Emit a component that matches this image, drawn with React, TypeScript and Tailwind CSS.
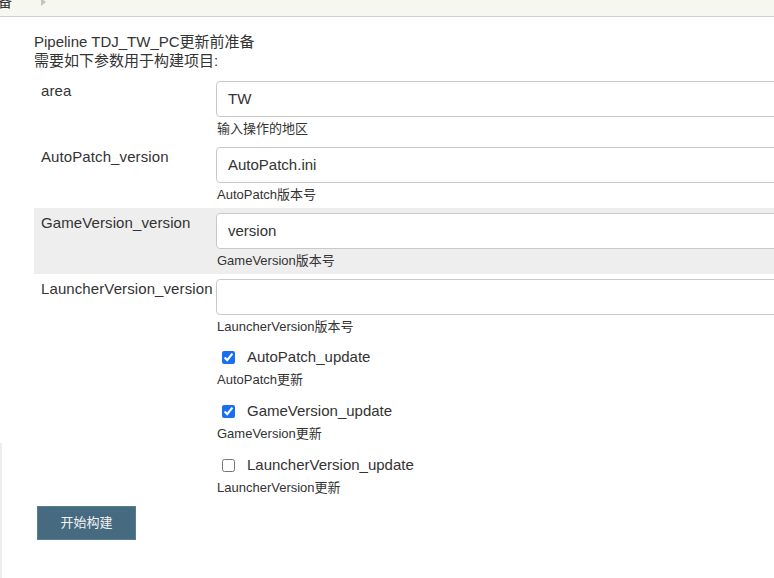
import React from "react";

const fields = [
  { name: "area", value: "TW", desc: "输入操作的地区", hl: false },
  { name: "AutoPatch_version", value: "AutoPatch.ini", desc: "AutoPatch版本号", hl: false },
  { name: "GameVersion_version", value: "version", desc: "GameVersion版本号", hl: true },
  { name: "LauncherVersion_version", value: "", desc: "LauncherVersion版本号", hl: false },
];

const checks = [
  { name: "AutoPatch_update", checked: true, desc: "AutoPatch更新" },
  { name: "GameVersion_update", checked: true, desc: "GameVersion更新" },
  { name: "LauncherVersion_update", checked: false, desc: "LauncherVersion更新" },
];

const font = { fontFamily: '"Liberation Sans", "Noto Sans CJK SC", sans-serif' };

export default function App() {
  return (
    <div className="relative w-[774px] h-[578px] overflow-hidden bg-white text-[#333]" style={font}>
      {/* breadcrumb bar */}
      <div className="h-[17px] bg-[#f6f8ef] border-b border-[#cfd0c8] flex items-end overflow-hidden">
        <span className="text-[14px] leading-[18px] mb-[5px] -ml-[2px]">备</span>
        <svg width="8" height="8" viewBox="0 0 8 8" className="ml-[28px] self-start -mt-[2px]">
          <path d="M1 0 L6 4 L1 8 Z" fill="#c4c4c4" />
        </svg>
      </div>

      {/* sidebar edge */}
      <div className="absolute left-0 top-[443px] bottom-0 w-[2px] bg-[#eeeeee]" />

      <div className="pl-[34px] pt-[16px]">
        <div className="text-[15px] leading-[18px]">Pipeline TDJ_TW_PC更新前准备</div>
        <div className="text-[15px] leading-[19px]">需要如下参数用于构建项目:</div>

        <div className="mt-[6px]">
          {fields.map((f) => (
            <div key={f.name} className={`flex pt-[5px] pb-[5px] ${f.hl ? "bg-[#eeeeee]" : ""}`}>
              <div className="w-[182px] shrink-0 pl-[7px] pt-[1px] text-[15px] leading-[18px] whitespace-nowrap tracking-[0.1px]">
                {f.name}
              </div>
              <div className="flex flex-col">
                <div className="w-[620px] h-[36px] bg-white border border-[#c9c9c9] rounded-[4px] pl-[11px] flex items-center text-[15px]">
                  {f.value}
                </div>
                <div className="mt-[4px] pl-[1px] text-[13px] leading-[16px]">{f.desc}</div>
              </div>
            </div>
          ))}

          {checks.map((c) => (
            <div key={c.name} className="flex pt-[8px] pb-[6px]">
              <div className="w-[182px] shrink-0" />
              <div className="flex flex-col">
                <label className="flex items-center h-[18px] text-[15px] leading-[18px]">
                  <input
                    type="checkbox"
                    defaultChecked={c.checked}
                    className="w-[13px] h-[13px] m-0 ml-[6px] mr-[12px] accent-[#1a6ff0]"
                  />
                  {c.name}
                </label>
                <div className="mt-[6px] pl-[1px] text-[13px] leading-[16px]">{c.desc}</div>
              </div>
            </div>
          ))}
        </div>

        <button className="mt-[4px] ml-[3px] w-[99px] h-[34px] bg-[#466a80] border border-[#5b7d91] text-[#f2f2f2] text-[13px]">
          开始构建
        </button>
      </div>
    </div>
  );
}
